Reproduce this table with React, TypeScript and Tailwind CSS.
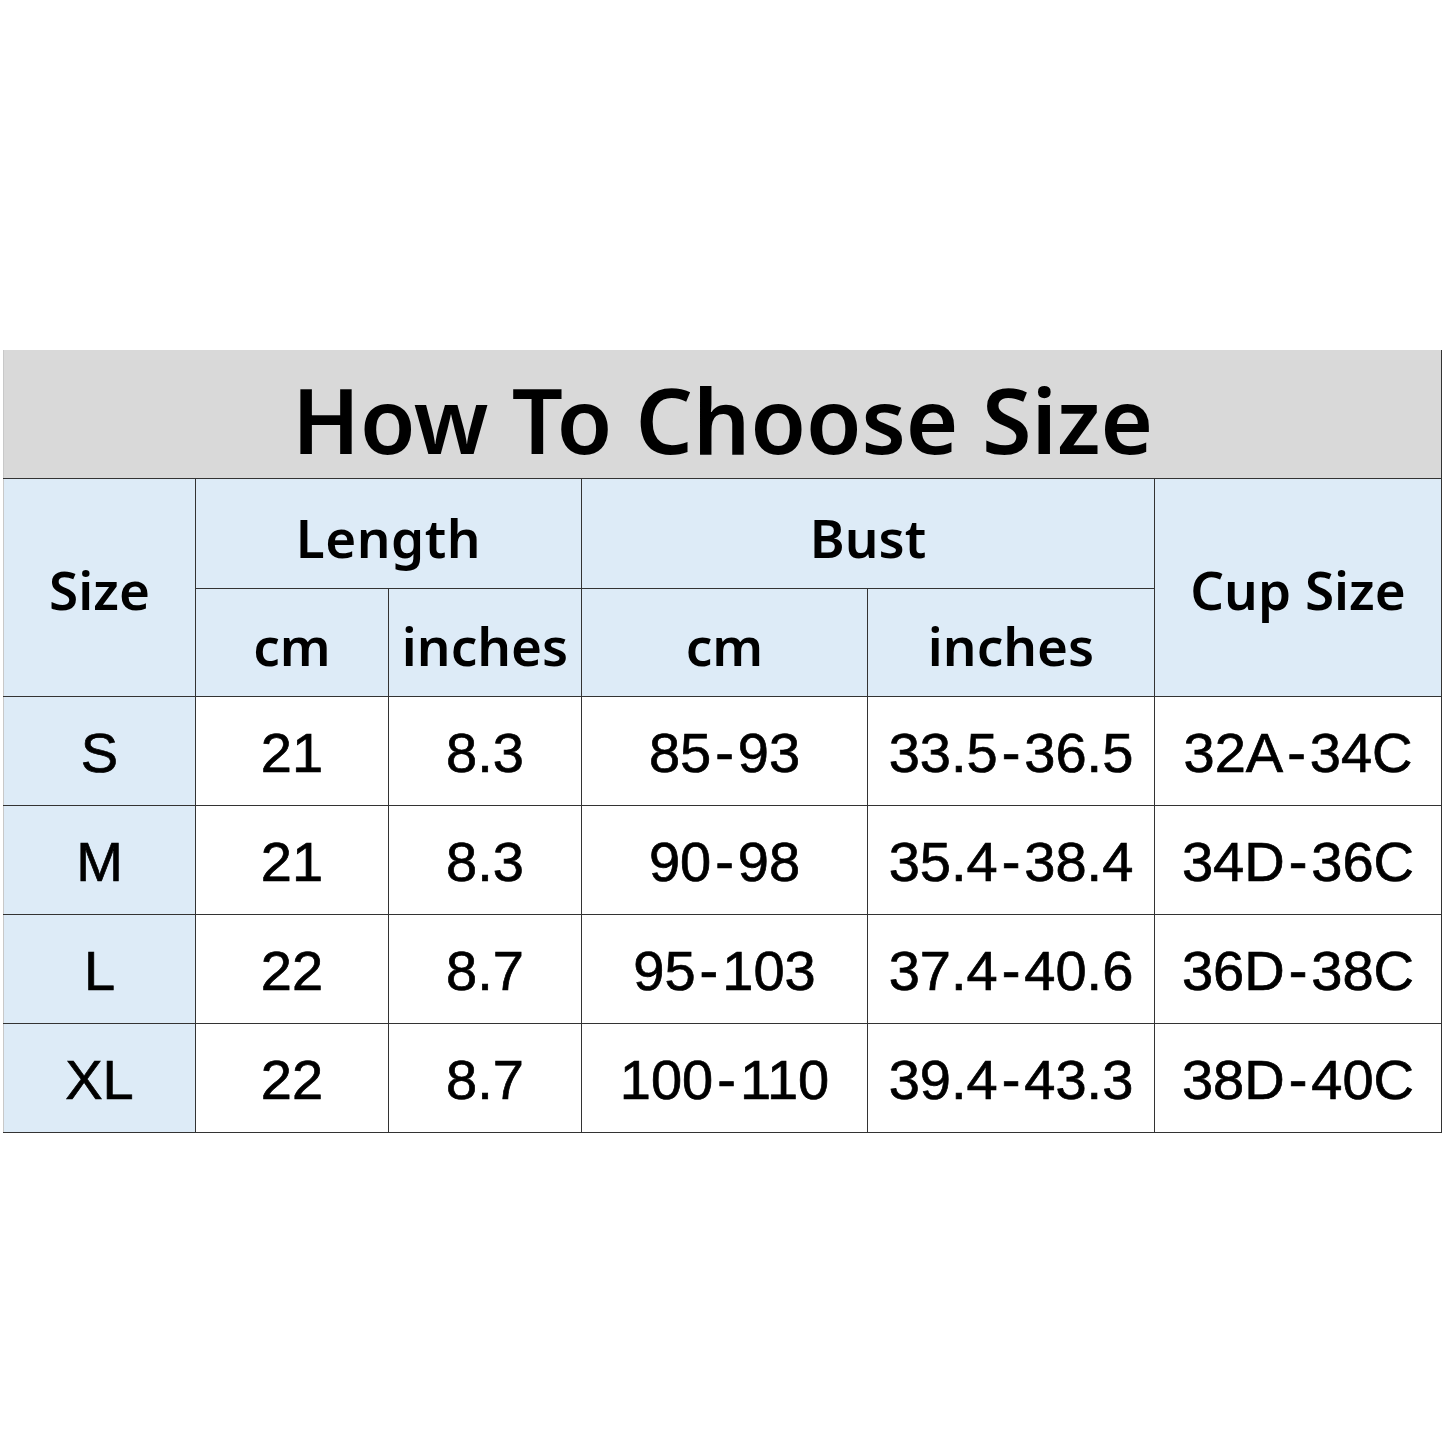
import React from "react";

const rows = [
  ["S", "21", "8.3", "85-93", "33.5-36.5", "32A-34C"],
  ["M", "21", "8.3", "90-98", "35.4-38.4", "34D-36C"],
  ["L", "22", "8.7", "95-103", "37.4-40.6", "36D-38C"],
  ["XL", "22", "8.7", "100-110", "39.4-43.3", "38D-40C"],
];

const hd = "border-[1.5px] border-[#333] bg-[#ddebf7] text-center align-middle font-semibold text-[53px] text-black p-0 leading-none";
const dc = "border-[1.5px] border-[#333] text-center align-middle text-[56px] text-black p-0 pt-[4px] leading-none [-webkit-text-stroke:0.7px_#000]";

function Val({ v }: { v: string }) {
  const parts = v.split("-");
  if (parts.length === 1) return <>{v}</>;
  return (
    <>
      {parts[0]}
      <span className="mx-[4px]">-</span>
      {parts[1]}
    </>
  );
}

export default function App() {
  return (
    <div className="w-[1445px] h-[1445px] bg-white pt-[350px] pl-[3px]">
      <table className="table-fixed border-collapse w-[1438px]" style={{ fontFamily: '"Noto Sans", sans-serif' }}>
        <colgroup>
          <col className="w-[192px]" />
          <col className="w-[193px]" />
          <col className="w-[193px]" />
          <col className="w-[286px]" />
          <col className="w-[287px]" />
          <col className="w-[287px]" />
        </colgroup>
        <tbody>
          <tr className="h-[128px]">
            <td colSpan={6} className="bg-[#d9d9d9] border-b-[1.5px] border-r-[1.5px] border-l border-[#333] border-l-[#c8c8c8] text-center align-middle font-semibold text-[90px] text-black p-0 pt-[10px] leading-none">
              How To Choose Size
            </td>
          </tr>
          <tr className="h-[110px]">
            <td rowSpan={2} className={hd + " border-l-[#c8c8c8] pt-[4px]"}>Size</td>
            <td colSpan={2} className={hd + " pt-[8px] tracking-[0.5px]"}>Length</td>
            <td colSpan={2} className={hd + " pt-[8px]"}>Bust</td>
            <td rowSpan={2} className={hd + " pt-[4px]"}>Cup Size</td>
          </tr>
          <tr className="h-[108px]">
            <td className={hd + " pt-[6px]"}>cm</td>
            <td className={hd + " pt-[6px]"}>inches</td>
            <td className={hd + " pt-[6px]"}>cm</td>
            <td className={hd + " pt-[6px]"}>inches</td>
          </tr>
          {rows.map((r) => (
            <tr key={r[0]} className="h-[109px]">
              {r.map((c, i) => (
                <td
                  key={i}
                  className={dc + (i === 0 ? " bg-[#ddebf7] border-l-[#c8c8c8]" : " bg-white")}
                  style={{ fontFamily: '"Liberation Sans", Arial, sans-serif' }}
                >
                  <Val v={c} />
                </td>
              ))}
            </tr>
          ))}
        </tbody>
      </table>
    </div>
  );
}
